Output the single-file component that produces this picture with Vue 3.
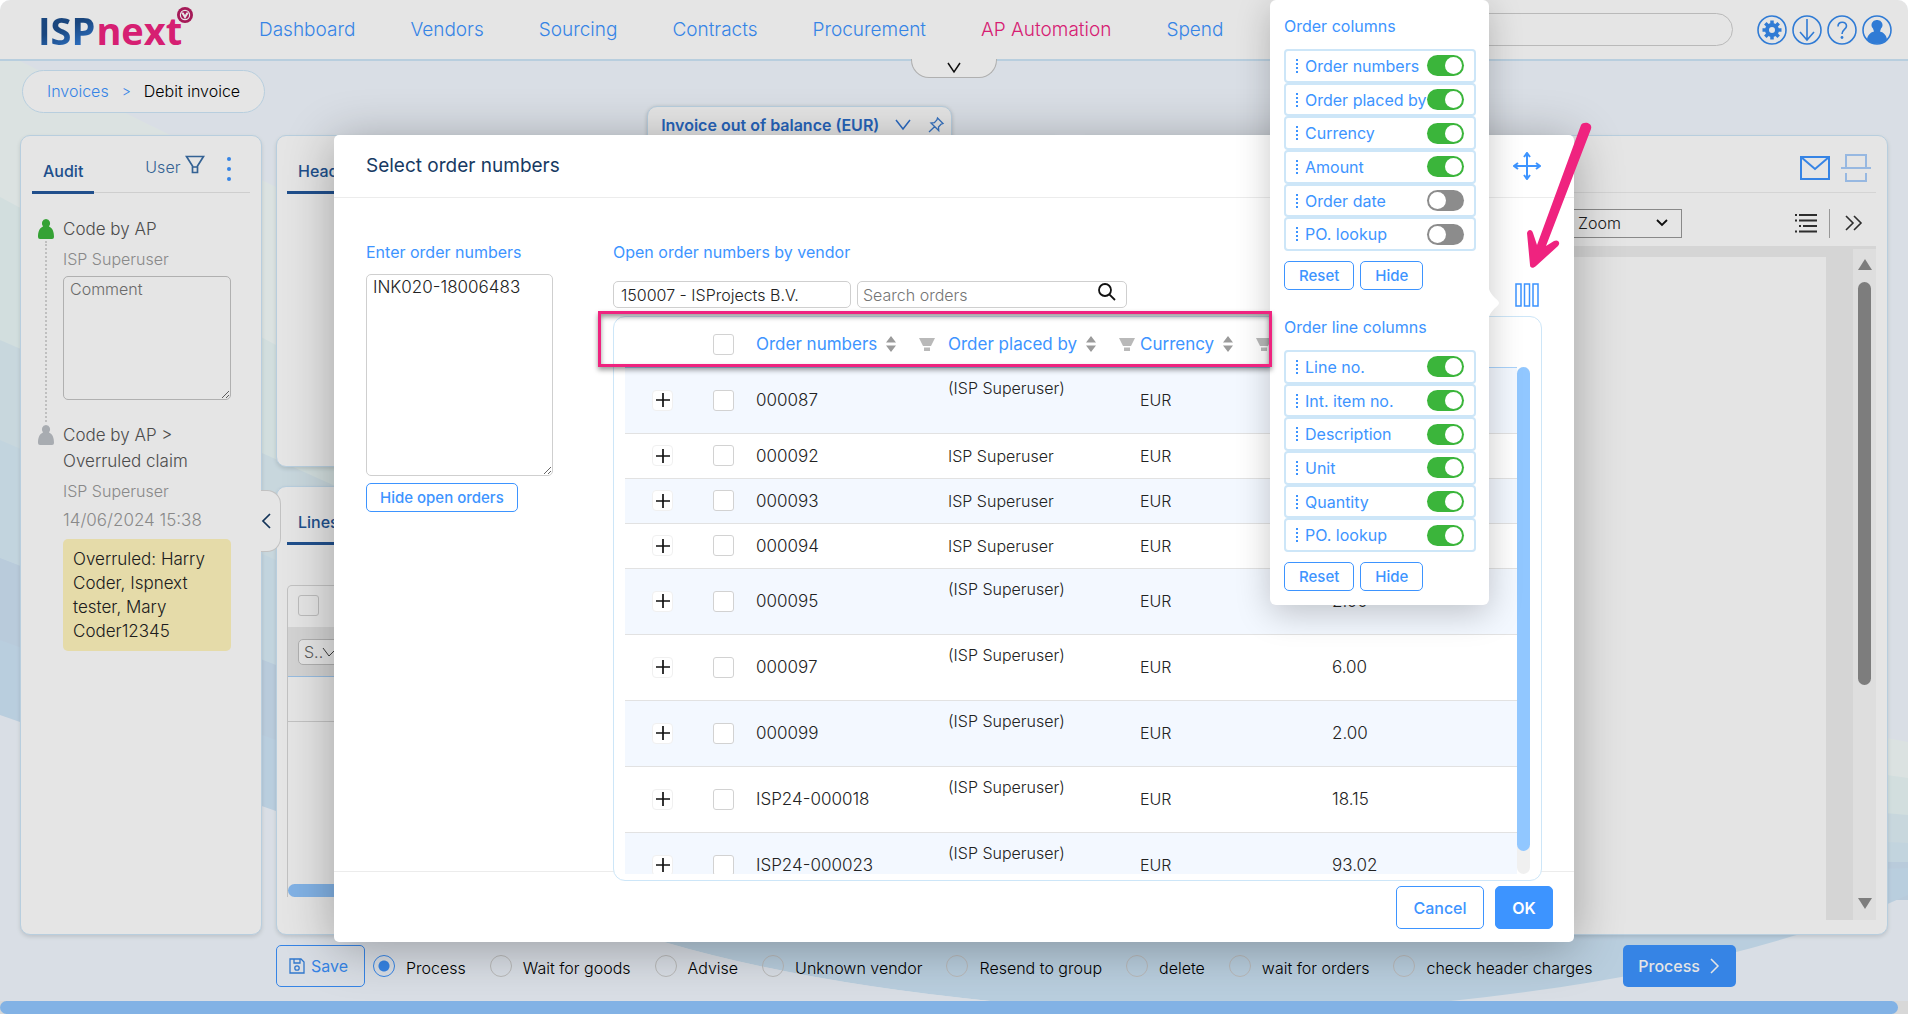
<script setup>
import { ref } from 'vue'

const nav = [
  { label: 'Dashboard' },
  { label: 'Vendors' },
  { label: 'Sourcing' },
  { label: 'Contracts' },
  { label: 'Procurement' },
  { label: 'AP Automation', active: true },
  { label: 'Spend' },
]

const rows = ref([
  { no: '000087', by: '(ISP Superuser)', amount: '', tall: true },
  { no: '000092', by: 'ISP Superuser', amount: '' },
  { no: '000093', by: 'ISP Superuser', amount: '' },
  { no: '000094', by: 'ISP Superuser', amount: '' },
  { no: '000095', by: '(ISP Superuser)', amount: '2.00', tall: true },
  { no: '000097', by: '(ISP Superuser)', amount: '6.00', tall: true },
  { no: '000099', by: '(ISP Superuser)', amount: '2.00', tall: true },
  { no: 'ISP24-000018', by: '(ISP Superuser)', amount: '18.15', tall: true },
  { no: 'ISP24-000023', by: '(ISP Superuser)', amount: '93.02', tall: true },
])

const headers = ['Order numbers', 'Order placed by', 'Currency', 'Amount']

const groups = ref([
  {
    title: 'Order columns',
    items: [
      { label: 'Order numbers', on: true },
      { label: 'Order placed by', on: true },
      { label: 'Currency', on: true },
      { label: 'Amount', on: true },
      { label: 'Order date', on: false },
      { label: 'PO. lookup', on: false },
    ],
  },
  {
    title: 'Order line columns',
    items: [
      { label: 'Line no.', on: true },
      { label: 'Int. item no.', on: true },
      { label: 'Description', on: true },
      { label: 'Unit', on: true },
      { label: 'Quantity', on: true },
      { label: 'PO. lookup', on: true },
    ],
  },
])

const actions = [
  'Process',
  'Wait for goods',
  'Advise',
  'Unknown vendor',
  'Resend to group',
  'delete',
  'wait for orders',
  'check header charges',
]
const action = ref('Process')
const orderText = ref('INK020-18006483')
const vendor = ref('150007 - ISProjects B.V.')
</script>

<template>
  <div class="app">
    <svg class="waves" viewBox="0 0 1908 1014" preserveAspectRatio="none" aria-hidden="true">
      <path fill="#f4fcfb" d="M0 50 20 61 170 135 276 187 Q900 560 1908 742V900H0Z" />
      <path fill="#eaf8f8" d="M0 197 276 345 Q900 640 1908 778V900H0Z" />
      <path fill="#dff0f7" d="M0 340 262 453 333 485 Q1000 740 1908 815V900H0Z" />
      <path fill="#d9edf8" d="M0 440 276 560 Q1000 800 1908 843V900H0Z" />
      <path fill="#cee2f4" d="M0 558 276 665 Q1000 860 1908 862V900H0Z" />
      <path fill="#cfe6f8" d="M0 640 276 740 Q1000 900 1908 868V895Q1850 922 1793 936 1650 980 1451 1001 1200 1024 990 1001 800 982 664 942L276 811 0 715Z" />
      <path fill="#f2f8ff" d="M0 715 276 811 664 942 Q800 982 990 1001L1000 1014H0Z" />
    </svg>

    <header class="topbar">
      <a class="logo" href="#" aria-label="ISPnext">
        <span class="isp">ISP</span><span class="next">next</span>
        <svg class="logo-dot" viewBox="0 0 18 18" width="18" height="18">
          <circle cx="9" cy="9" r="8" fill="#b81d62" />
          <circle cx="9" cy="9" r="4.6" fill="none" stroke="#fff" stroke-width="1.2" />
          <path d="M5 6.5h2.500L9 9l1.500-2.500H13L9 13Z" fill="#fff" />
        </svg>
      </a>
      <nav class="nav">
        <a v-for="n in nav" :key="n.label" href="#" :class="{ active: n.active }">{{ n.label }}</a>
      </nav>
      <input class="global-search" type="text" aria-label="Search" />
      <div class="top-icons">
        <button aria-label="Settings">
          <svg viewBox="0 0 30 30" width="30" height="30">
            <circle cx="15" cy="15" r="14" class="ln" />
            <circle cx="15" cy="15" r="5" fill="none" stroke="#368aee" stroke-width="4" />
            <g stroke="#368aee" stroke-width="3.500">
              <path d="M15 5.500v4M15 20.500v4M5.500 15h4M20.500 15h4M8.300 8.300l2.800 2.800M18.900 18.900l2.800 2.800M8.300 21.700l2.800-2.800M18.900 11.100l2.800-2.800" />
            </g>
          </svg>
        </button>
        <button aria-label="Download">
          <svg viewBox="0 0 30 30" width="30" height="30">
            <circle cx="15" cy="15" r="14" class="ln" />
            <path class="ln" d="M15 4v21M8 17l7 8 7-8" />
          </svg>
        </button>
        <button aria-label="Help">
          <svg viewBox="0 0 30 30" width="30" height="30">
            <circle cx="15" cy="15" r="14" class="ln" />
            <path class="ln" d="M11 11.500c0-5.500 8.500-5.500 8.500-.5 0 3.500-4.500 3.500-4.500 8" />
            <circle cx="15" cy="22.500" r="1.400" fill="#368aee" />
          </svg>
        </button>
        <button aria-label="Account">
          <svg viewBox="0 0 30 30" width="30" height="30">
            <circle cx="15" cy="15" r="14" class="ln" />
            <path fill="#368aee" d="M15 5a5 5 0 0 1 4 8.500l-1 3c4 1 6.500 4 7 8a14 14 0 0 1-20 0c.5-4 3-7 7-8l-1-3A5 5 0 0 1 15 5Z" />
          </svg>
        </button>
      </div>
      <button class="drop-tab" aria-label="Expand menu">
        <svg viewBox="0 0 16 12" width="16" height="12"><path d="M2 1l6 9 6-9" fill="none" stroke="#111" stroke-width="1.500" /></svg>
      </button>
    </header>

    <div class="crumb-row">
      <nav class="crumb"><a href="#">Invoices</a><span class="sep">&gt;</span><span>Debit invoice</span></nav>
      <div class="balance">
        <strong>Invoice out of balance (EUR)</strong>
        <svg viewBox="0 0 16 12" width="16" height="12"><path d="M1 1l7 9 7-9" fill="none" stroke="#2f76d8" stroke-width="1.500" /></svg>
        <svg viewBox="0 0 18 18" width="18" height="18"><path d="M10.500 2l5.500 5.500-1.800.6-2.700 3 .2 3.400L4 7l3.400-.3 2.500-2.700ZM7.500 10.800 2 16" fill="none" stroke="#3d7fd6" stroke-width="1.300" /></svg>
      </div>
    </div>

    <main class="columns">
      <section class="panel audit">
        <div class="tabs">
          <a class="tab" href="#">Audit</a>
          <a class="user" href="#">User
            <svg viewBox="0 0 20 19" width="20" height="19"><path d="M1.500 1.500h17L12.500 11v6.500h-5V11ZM7.500 12h5" fill="none" stroke="#3a6ea5" stroke-width="1.700" /></svg>
          </a>
          <button class="kebab" aria-label="More">
            <svg viewBox="0 0 4 24" width="4" height="24" fill="#3d94ff"><circle cx="2" cy="2" r="2" /><circle cx="2" cy="12" r="2" /><circle cx="2" cy="22" r="2" /></svg>
          </button>
        </div>
        <div class="steps">
          <div class="step first">
            <svg class="person" viewBox="0 0 16 20" width="16" height="20" fill="#3cb53c"><path d="M8 0a4.500 4.500 0 0 1 3 7.500c3.500 1.500 5 5 5 10.500a2 2 0 0 1-2 2H2a2 2 0 0 1-2-2C0 12.500 1.500 9 5 7.500A4.500 4.500 0 0 1 8 0Z" /></svg>
            <div class="step-body">
              <p class="s-title">Code by AP</p>
              <p class="s-sub">ISP Superuser</p>
              <textarea class="comment" placeholder="Comment" aria-label="Comment"></textarea>
            </div>
          </div>
          <div class="step">
            <svg class="person" viewBox="0 0 16 20" width="16" height="20" fill="#bcc0c6"><path d="M8 0a4.500 4.500 0 0 1 3 7.500c3.500 1.500 5 5 5 10.500a2 2 0 0 1-2 2H2a2 2 0 0 1-2-2C0 12.500 1.500 9 5 7.500A4.500 4.500 0 0 1 8 0Z" /></svg>
            <div class="step-body">
              <p class="s-title">Code by AP &gt; Overruled claim</p>
              <p class="s-sub">ISP Superuser</p>
              <p class="s-date">14/06/2024 15:38</p>
              <p class="note">Overruled: Harry Coder, Ispnext tester, Mary Coder12345</p>
            </div>
          </div>
        </div>
        <button class="handle" aria-label="Collapse panel">
          <svg viewBox="0 0 10 16" width="10" height="16"><path d="M9 1 2 8l7 7" fill="none" stroke="#163a63" stroke-width="1.700" /></svg>
        </button>
      </section>

      <div class="middle">
        <section class="panel head-panel">
          <div class="tabs"><a class="tab" href="#">Header</a></div>
        </section>
        <section class="panel lines-panel">
          <div class="tabs"><a class="tab" href="#">Lines</a></div>
          <div class="lines-grid">
            <div class="lg-head"><input type="checkbox" aria-label="Select all lines" /></div>
            <div class="lg-filter"><select class="mini" aria-label="Status filter"><option>S..</option></select></div>
            <div class="lg-row"></div>
            <div class="lg-space"></div>
            <div class="lg-scroll"></div>
          </div>
        </section>
      </div>

      <section class="panel viewer">
        <div class="v-top">
          <svg viewBox="0 0 30 24" width="30" height="24" fill="none" stroke="#3d94ff" stroke-width="2"><path d="M1 1h28v22H1ZM1 1l14 12L29 1" /></svg>
          <svg viewBox="0 0 30 28" width="30" height="28" fill="none" stroke="#a9cdfb" stroke-width="2"><path d="M5 13V1h20v12M0 14h30M5 19v8h20v-8" /></svg>
        </div>
        <div class="v-tools">
          <select class="zoom" aria-label="Zoom"><option>Zoom</option></select>
          <svg viewBox="0 0 22 20" width="22" height="20" stroke="#333" stroke-width="2"><path d="M0 2h2M4 2h18M0 7.500h2M4 7.500h18M4 13h2M8 13h14M0 18.500h2M4 18.500h18" /></svg>
          <span class="v-sep"></span>
          <svg viewBox="0 0 18 16" width="18" height="16" fill="none" stroke="#333" stroke-width="1.600"><path d="M1 1l7 7-7 7M9 1l7 7-7 7" /></svg>
        </div>
        <div class="v-doc">
          <div class="page"></div>
          <div class="v-scroll">
            <span class="up"></span>
            <span class="thumb"></span>
            <span class="down"></span>
          </div>
        </div>
      </section>
    </main>

    <footer class="actions">
      <button class="save">
        <svg viewBox="0 0 16 16" width="16" height="16" fill="none" stroke="#3785e5" stroke-width="1.300"><path d="M1 1h11l3 3v11H1ZM5 1v4h6V1" /><circle cx="8" cy="10" r="2.200" /></svg>
        Save
      </button>
      <label v-for="a in actions" :key="a" class="choice">
        <input v-model="action" type="radio" name="action" :value="a" />
        <span>{{ a }}</span>
      </label>
      <button class="process">Process
        <svg viewBox="0 0 10 16" width="10" height="16"><path d="M1 1l7 7-7 7" fill="none" stroke="#fff" stroke-width="1.500" /></svg>
      </button>
    </footer>
    <div class="page-scroll"><span></span></div>
    <div class="dim"></div>

    <section class="modal" role="dialog" aria-label="Select order numbers">
      <div class="m-head">
        <h2>Select order numbers</h2>
        <svg viewBox="0 0 28 28" width="28" height="28" fill="none" stroke="#3d94ff" stroke-width="2"><path d="M14 2v24M2 14h24M11 5l3-4 3 4M11 23l3 4 3-4M5 11l-4 3 4 3M23 11l4 3-4 3" /></svg>
      </div>
      <div class="m-body">
        <div class="m-left">
          <label class="lbl" for="nums">Enter order numbers</label>
          <textarea id="nums" v-model="orderText" spellcheck="false"></textarea>
          <button class="btn small hide-open">Hide open orders</button>
        </div>
        <div class="m-right">
          <label class="lbl" for="vendor">Open order numbers by vendor</label>
          <div class="filters">
            <input id="vendor" v-model="vendor" class="vendor" type="text" />
            <div class="search">
              <input type="text" placeholder="Search orders" aria-label="Search orders" />
              <svg viewBox="0 0 20 20" width="20" height="20" fill="none" stroke="#111" stroke-width="1.800"><circle cx="8" cy="7" r="6" /><path d="M12.300 11.300 18 17" /></svg>
            </div>
            <button class="cols-btn" aria-label="Choose columns">
              <svg viewBox="0 0 24 24" width="24" height="24" fill="none" stroke="#3d94ff" stroke-width="1.500"><path d="M1 1h5v22H1ZM9.500 1h5v22h-5ZM18 1h5v22h-5Z" /></svg>
            </button>
          </div>
          <div class="card">
            <table>
              <thead>
                <tr>
                  <th></th>
                  <th><input type="checkbox" aria-label="Select all orders" /></th>
                  <th v-for="h in headers" :key="h">
                    <div class="th">
                      <span>{{ h }}</span>
                      <svg viewBox="0 0 12 16" width="12" height="16" fill="#9b9b9b"><path d="M6 0l5 6.500H1ZM6 16 1 9.500h10Z" /></svg>
                      <svg class="fun" viewBox="0 0 16 13" width="16" height="13" fill="#b9b9b9"><path d="M0 0h16l-4 8H4ZM5 9.500h6V13H5Z" /></svg>
                    </div>
                  </th>
                </tr>
              </thead>
              <tbody>
                <tr v-for="r in rows" :key="r.no" :class="{ tall: r.tall }">
                  <td><button class="plus" aria-label="Expand order"><svg viewBox="0 0 14 14" width="14" height="14"><path d="M7 0v14M0 7h14" stroke="#111" stroke-width="1.700" /></svg></button></td>
                  <td><input type="checkbox" :aria-label="r.no" /></td>
                  <td class="num">{{ r.no }}</td>
                  <td class="by">{{ r.by }}</td>
                  <td>EUR</td>
                  <td class="num">{{ r.amount }}</td>
                </tr>
              </tbody>
            </table>
            <div class="t-scroll"><span></span></div>
          </div>
        </div>
      </div>
      <div class="m-foot">
        <button class="btn cancel">Cancel</button>
        <button class="btn ok">OK</button>
      </div>
    </section>

    <aside class="popover">
      <div v-for="g in groups" :key="g.title" class="group">
        <h3>{{ g.title }}</h3>
        <div class="items">
          <label v-for="i in g.items" :key="i.label" class="item">
            <svg viewBox="0 0 2 14" width="2" height="14" fill="#3d94ff"><path d="M0 0h2v2H0ZM0 4h2v2H0ZM0 8h2v2H0ZM0 12h2v2H0Z" /></svg>
            <span>{{ i.label }}</span>
            <input v-model="i.on" class="toggle" type="checkbox" role="switch" />
          </label>
        </div>
        <div class="g-btns">
          <button class="btn small">Reset</button>
          <button class="btn small">Hide</button>
        </div>
      </div>
      <svg class="notch" viewBox="0 0 11 28" width="11" height="28"><path d="M0 0Q1 4 6 9 10 12 10 14T6 19Q1 24 0 28Z" fill="#fff" /></svg>
    </aside>

    <div class="mark"></div>
    <svg class="arrow" viewBox="0 0 70 152" width="70" height="152" aria-hidden="true">
      <path d="M57 6C59 2 69 3 67 10L22 127 30 122C34 120 37 124 34 127L12 147C9 150 6 149 6 146L3 114C4 110 8 110 9 114L13 126Z" fill="#ef237f" />
    </svg>
  </div>
</template>

<style>
html, body { background: #fff; }
body { overflow: hidden; }
</style>

<style scoped>
.app, .app * { box-sizing: border-box; }
.app {
  position: relative;
  height: 100vh;
  display: flex;
  flex-direction: column;
  overflow: hidden;
  border-radius: 10px 10px 0 0;
  background: #f2f8ff;
  color: #222;
  font: 300 16px/24px Inter, "Liberation Sans", sans-serif;
}
button, input, select, textarea { font: inherit; color: inherit; margin: 0; }
button { background: none; border: 0; padding: 0; cursor: pointer; }
a { text-decoration: none; color: #3d94ff; }
p, h2, h3 { margin: 0; font-size: inherit; font-weight: inherit; }
svg { display: block; flex: none; }
.waves { position: absolute; inset: 0; width: 100%; height: 100%; }

.topbar {
  position: relative;
  z-index: 0;
  flex: none;
  height: 61px;
  display: flex;
  align-items: center;
  padding: 0 16px 0 38px;
  background: #fff;
  border-bottom: 2px solid #cde6f8;
}
.logo {
  position: relative;
  display: flex;
  width: 156px;
  font: 700 38px/48px "Open Sans", sans-serif;
}
.isp {
  color: transparent;
  background: linear-gradient(160deg, #1d4f8d 45%, #3d94ff 100%);
  background-clip: text;
  margin-right: 1px;
}
.next { color: #ef237f; }
.logo-dot { position: absolute; right: 0; top: 0; }
.nav { display: flex; gap: 55px; margin-left: 65px; font-size: 19px; }
.nav .active { color: #ef237f; }
.global-search {
  flex: 1;
  height: 33px;
  margin-left: 60px;
  border: 1px solid #cfcfcf;
  border-radius: 17px;
  background: transparent;
}
.top-icons { display: flex; gap: 5px; margin-left: 24px; }
.ln { fill: none; stroke: #368aee; stroke-width: 1.600; }
.drop-tab {
  position: absolute;
  left: calc(50% - 43px);
  top: 59px;
  width: 86px;
  height: 19px;
  display: flex;
  justify-content: center;
  align-items: center;
  background: #fff;
  border: 1px solid #c4c4c4;
  border-top: 0;
  border-radius: 0 0 18px 18px;
}

.crumb-row {
  position: relative;
  z-index: 0;
  flex: none;
  height: 74px;
  padding: 9px 22px 0;
  display: flex;
  align-items: flex-start;
}
.crumb {
  display: flex;
  gap: 13px;
  height: 43px;
  align-items: center;
  padding: 0 24px 2px;
  background: #fff;
  border: 1px solid #cde6f8;
  border-radius: 22px;
  color: #000;
}
.sep { color: #3d94ff; font-size: 14px; }
.balance {
  margin: 36px 0 0 382px;
  height: 38px;
  display: flex;
  align-items: center;
  gap: 16px;
  padding: 0 6px 0 13px;
  background: #fff;
  border: 1px solid #cde6f8;
  border-radius: 10px 10px 0 0;
  box-shadow: 0 1px 4px rgba(0, 0, 0, .2);
  color: #2b6fcf;
}
.balance strong { font-weight: 600; }

.columns {
  position: relative;
  z-index: 0;
  flex: 1;
  min-height: 0;
  display: flex;
  gap: 14px;
  padding: 0 20px;
}
.panel {
  position: relative;
  background: #fff;
  border: 1px solid #cde6f8;
  border-radius: 10px;
  box-shadow: 0 2px 4px rgba(0, 0, 0, .12);
}
.audit { width: 242px; flex: none; padding: 0 11px; z-index: 1; }
.tabs {
  height: 57px;
  display: flex;
  align-items: flex-end;
  border-bottom: 1px solid #e6e6e6;
}
.tab {
  height: 35px;
  margin-bottom: -2px;
  padding: 0 11px;
  color: #24599c;
  font-weight: 500;
  border-bottom: 3px solid #24599c;
}
.user { display: flex; gap: 5px; margin: 0 0 13px 51px; color: #3a6ea5; }
.kebab { margin: 0 0 11px 22px; }
.steps { padding: 23px 19px 0 6px; }
.step { position: relative; display: flex; gap: 9px; }
.step.first { padding-bottom: 22px; }
.step.first::before {
  content: "";
  position: absolute;
  left: 7px;
  top: 25px;
  bottom: 0;
  border-left: 2px dotted #d5d5d5;
}
.person { margin-top: 3px; }
.step-body { flex: 1; color: #555; }
.s-title { font-size: 17px; line-height: 26px; }
.s-sub { color: #999; line-height: 34px; }
.s-date { font-size: 17px; color: #999; line-height: 24px; }
.comment {
  display: block;
  width: 100%;
  height: 124px;
  padding: 0 6px;
  background: transparent;
  border: 1px solid #c4c4c4;
  border-radius: 5px;
}
.comment::placeholder { color: #777; }
.note {
  margin-top: 7px;
  padding: 8px 10px;
  background: #fff4bd;
  border-radius: 5px;
  color: #222;
  font-size: 17px;
}
.handle {
  position: absolute;
  left: 240px;
  top: 354px;
  width: 20px;
  height: 62px;
  background: #fff;
  border: 1px solid #d8d8d8;
  border-left: 0;
  border-radius: 0 14px 14px 0;
}
.middle { flex: 1; display: flex; flex-direction: column; gap: 19px; }
.head-panel { height: 332px; padding: 0 10px; }
.lines-panel { flex: 1; padding: 0 10px 37px; display: flex; flex-direction: column; }
.lines-grid {
  flex: 1;
  margin-top: 41px;
  display: flex;
  flex-direction: column;
  border: 1px solid #d8d8d8;
  border-bottom: 0;
  border-radius: 5px 5px 0 0;
}
.lg-head, .lg-filter { padding: 9px 10px; }
.lg-head { height: 41px; }
.lg-filter { height: 50px; background: #ebebeb; border-bottom: 1px solid #a9d2fa; padding-top: 12px; }
.mini {
  width: 60px;
  height: 26px;
  padding: 0 5px;
  border: 1px solid #c4c4c4;
  border-radius: 5px;
  background: #fff url("data:image/svg+xml,%3Csvg xmlns='http://www.w3.org/2000/svg' width='16' height='10'%3E%3Cpath d='M1 1l6 8 8-8' fill='none' stroke='%23444'/%3E%3C/svg%3E") no-repeat left 23px center;
  color: #666;
  appearance: none;
}
.lg-row { height: 45px; border-bottom: 1px solid #d8d8d8; }
.lg-space { flex: 1; }
.lg-scroll { height: 13px; background: #91c7ff; border-radius: 7px; }

.viewer { flex: 1; padding: 0 11px 14px; display: flex; flex-direction: column; }
.v-top {
  flex: none;
  height: 57px;
  display: flex;
  justify-content: flex-end;
  align-items: center;
  gap: 11px;
  padding: 8px 5px 0 0;
  border-bottom: 1px solid #ececec;
}
.v-tools {
  flex: none;
  height: 53px;
  display: flex;
  align-items: center;
  justify-content: flex-end;
  padding: 7px 13px 0 0;
}
.zoom {
  width: 124px;
  height: 29px;
  margin-right: 113px;
  padding: 0 19px;
  border: 1px solid #999;
  background: transparent url("data:image/svg+xml,%3Csvg xmlns='http://www.w3.org/2000/svg' width='12' height='8'%3E%3Cpath d='M1 1l5 5 5-5' fill='none' stroke='%23111' stroke-width='1.800'/%3E%3C/svg%3E") no-repeat right 13px center;
  appearance: none;
}
.v-sep { width: 1px; height: 29px; margin: 0 15px 0 12px; background: #aaa; }
.v-doc { flex: 1; display: flex; background: #eeeeee; }
.page { flex: 1; margin: 11px 27px 0 0; background: #fefefe; }
.v-scroll {
  width: 23px;
  margin-top: 3px;
  display: flex;
  flex-direction: column;
  align-items: center;
  background: #f8f8f8;
  padding: 10px 0 11px;
}
.up, .down { border: 7px solid transparent; border-top: 0; border-bottom: 11px solid #8c8c8c; }
.down { border-bottom: 0; border-top: 11px solid #8c8c8c; margin-top: auto; }
.thumb { width: 13px; height: 62%; margin-top: 12px; border-radius: 7px; background: #8c8c8c; }

.actions {
  position: relative;
  z-index: 0;
  flex: none;
  height: 66px;
  display: flex;
  align-items: flex-start;
  padding: 10px 0 0 276px;
  color: #000;
}
.save {
  width: 89px;
  height: 42px;
  margin-right: 8px;
  display: flex;
  align-items: center;
  justify-content: center;
  gap: 6px;
  padding-right: 4px;
  border: 1px solid #3d94ff;
  border-radius: 5px;
  color: #3d94ff;
  font-weight: 400;
}
.choice { display: flex; align-items: center; gap: 11px; height: 42px; margin-right: 24px; }
.choice span { padding-top: 4px; }
.choice input {
  appearance: none;
  width: 22px;
  height: 22px;
  border: 1px solid #cfcfcf;
  border-radius: 50%;
}
.choice input:checked { border-color: #3d94ff; background: radial-gradient(circle, #3d94ff 5px, transparent 6px); }
.process {
  width: 113px;
  height: 42px;
  margin-left: 6px;
  display: flex;
  align-items: center;
  justify-content: center;
  gap: 10px;
  border-radius: 5px;
  background: #3d94ff;
  color: #fff;
  font-weight: 500;
}
.page-scroll { position: relative; z-index: 0; flex: none; height: 13px; padding-right: 10px; background: #f1f1f1; }
.page-scroll span { display: block; height: 13px; background: #91c7ff; border-radius: 7px; }
.dim { position: absolute; inset: 0; background: rgba(0, 0, 0, .1); }

.modal {
  position: absolute;
  inset: 135px 334px 72px;
  display: flex;
  flex-direction: column;
  background: #fff;
  border-radius: 5px;
  box-shadow: 0 6px 50px rgba(0, 0, 0, .3);
}
.m-head {
  flex: none;
  height: 63px;
  display: flex;
  align-items: center;
  justify-content: space-between;
  padding: 0 33px 0 32px;
  border-bottom: 1px solid #ececec;
}
.m-head h2 { font-size: 19px; font-weight: 400; color: #173a63; }
.m-body { flex: 1; min-height: 0; display: flex; gap: 60px; padding: 42px 32px 0; border-bottom: 1px solid #ececec; }
.m-left { width: 187px; }
.lbl { display: block; color: #3d94ff; font-weight: 400; margin-bottom: 10px; }
.m-left textarea {
  display: block;
  width: 100%;
  height: 202px;
  padding: 0 6px;
  border: 1px solid #cfcfcf;
  border-radius: 5px;
  font-size: 17px;
}
.btn {
  border: 1px solid #3d94ff;
  border-radius: 5px;
  background: #fff;
  color: #3d94ff;
  font-weight: 500;
}
.small { height: 29px; padding: 0 13px; font-size: 15px; line-height: 20px; }
.hide-open { margin-top: 7px; }
.m-right { flex: 1; display: flex; flex-direction: column; }
.filters { display: flex; margin-top: 7px; gap: 6px; flex: none; height: 35px; }
.vendor, .search { height: 27px; border: 1px solid #cfcfcf; border-radius: 5px; background: #fff; }
.vendor { width: 238px; padding: 0 7px; }
.search { width: 270px; display: flex; align-items: center; padding: 0 9px 0 5px; }
.search input { flex: 1; min-width: 0; border: 0; padding: 0; outline: 0; background: none; }
.search svg { margin-bottom: 4px; }
.search input::placeholder { color: #757575; }
.cols-btn { margin: 2px 3px 0 auto; height: 24px; }
.card {
  flex: none;
  height: 565px;
  display: flex;
  padding: 0 11px 6px;
  border: 1px solid #cde6f8;
  border-radius: 12px;
  background: #fff;
  overflow: hidden;
  position: relative;
}
table { flex: 1; display: block; height: 557px; overflow: hidden; border-collapse: collapse; min-width: 0; }
th {
  height: 50px;
  padding: 0;
  border-bottom: 1px solid #a9d2fa;
  color: #3d94ff;
  font-size: 17px;
  font-weight: 400;
  vertical-align: middle;
  white-space: nowrap;
}
th:nth-child(1), td:nth-child(1) { width: 75px; min-width: 75px; }
th:nth-child(2), td:nth-child(2) { width: 47px; min-width: 47px; }
th:nth-child(n + 3), td:nth-child(n + 3) { width: 192px; min-width: 192px; max-width: 192px; }
th:nth-child(6), td:nth-child(6) { width: 100%; max-width: none; }
.th { display: flex; align-items: center; gap: 8px; padding: 5px 0 0 9px; }
.fun { margin-left: 14px; }
th input { margin-top: 6px; }
td { height: 45px; padding: 0 9px; border-bottom: 1px solid #e2e2e2; }
td:nth-child(1), td:nth-child(2), th:nth-child(2) { padding: 0; text-align: center; }
.num { font-size: 17px; }
tbody tr:nth-child(odd) { background: #f3f8ff; }
.tall td { height: 66px; }
.tall .by { vertical-align: top; padding-top: 8px; }
input[type="checkbox"]:not(.toggle) {
  appearance: none;
  display: block;
  width: 21px;
  height: 21px;
  margin-left: auto;
  margin-right: auto;
  border: 1px solid #d2d2d2;
  border-radius: 3px;
  background: #fff;
}
.lg-head input[type="checkbox"]:not(.toggle) { margin-left: 0; }
.plus {
  width: 21px;
  height: 21px;
  display: flex;
  align-items: center;
  justify-content: center;
  margin: 0 auto;
  background: #fff;
  border: 1px solid #f0f0f0;
  border-radius: 4px;
}
.t-scroll { width: 13px; height: 507px; margin: 50px 0 0; flex: none; border-radius: 7px; background: #f0f0f0; }
.t-scroll span { display: block; height: 484px; border-radius: 7px; background: #91c7ff; }
.m-foot { flex: none; height: 70px; display: flex; justify-content: flex-end; gap: 11px; padding: 14px 21px 0 0; }
.cancel { width: 88px; height: 43px; }
.ok { width: 58px; height: 43px; background: #3d94ff; color: #fff; font-weight: 600; }

.mark {
  position: absolute;
  left: 598px;
  right: 636px;
  top: 311px;
  height: 56px;
  border: 3px solid #ef237f;
  box-shadow: 0 3px 5px rgba(0, 0, 0, .4), inset 0 3px 5px rgba(0, 0, 0, .4);
  pointer-events: none;
}
.popover {
  position: absolute;
  top: 0;
  right: 419px;
  width: 219px;
  padding: 14px 13px 14px 14px;
  background: #fff;
  border-radius: 6px;
  box-shadow: 0 8px 34px rgba(0, 0, 0, .22);
}
.group + .group { margin-top: 25px; }
.group h3 { color: #3d94ff; font-weight: 400; margin-bottom: 11px; }
.items { height: 202px; display: flex; flex-direction: column; }
.item {
  flex: 1;
  display: flex;
  align-items: center;
  padding: 0 10px;
  border: 2px solid #cde6f8;
  border-radius: 4px;
  color: #3d94ff;
  font-weight: 400;
  white-space: nowrap;
}
.item span { width: 122px; margin-left: 7px; flex: none; }
.toggle {
  appearance: none;
  position: relative;
  flex: none;
  width: 37px;
  height: 21px;
  margin: 0 0 0 auto;
  border-radius: 11px;
  background: #8c8c8c;
}
.toggle::before {
  content: "";
  position: absolute;
  left: 2px;
  top: 2px;
  width: 17px;
  height: 17px;
  border-radius: 50%;
  background: #fff;
}
.toggle:checked { background: #3bb53b; }
.toggle:checked::before { left: 18px; }
.g-btns { display: flex; gap: 6px; margin-top: 10px; }
.g-btns .btn { padding: 0 14px; }
.notch { position: absolute; left: 100%; top: 289px; }
.arrow { position: absolute; right: 314px; top: 119px; pointer-events: none; }
</style>
